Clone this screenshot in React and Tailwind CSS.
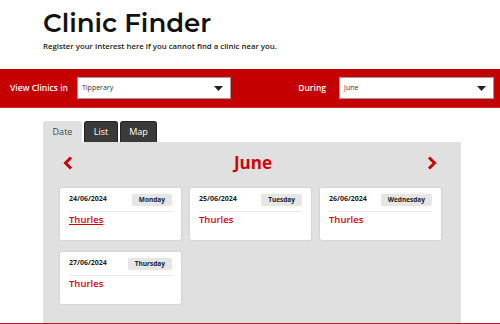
import React from "react";

const days = [
  { date: "24/06/2024", day: "Monday", underline: true },
  { date: "25/06/2024", day: "Tuesday" },
  { date: "26/06/2024", day: "Wednesday" },
  { date: "27/06/2024", day: "Thursday" },
];

function Caret() {
  return (
    <svg width="9" height="5" viewBox="0 0 9 5" className="shrink-0">
      <path d="M0 0 L9 0 L4.5 5 Z" fill="#222" />
    </svg>
  );
}

function Chevron({ dir }) {
  return (
    <svg width="10" height="14" viewBox="0 0 10 14">
      <polyline
        points={dir === "left" ? "8,1.5 2.5,7 8,12.5" : "2,1.5 7.5,7 2,12.5"}
        fill="none"
        stroke="#d00000"
        strokeWidth="3"
      />
    </svg>
  );
}

function Card({ d }) {
  return (
    <div className="w-[121px] h-[52px] bg-white rounded-[2px] shadow-[0_0_2px_rgba(0,0,0,0.18)] px-[9px] pt-[5px]">
      <div className="flex items-center justify-between h-[13px]">
        <span className="text-[7px] font-bold text-[#222]">{d.date}</span>
        <span className="h-[12px] px-[7px] flex items-center bg-[#e6e6e6] rounded-[2px] text-[6.5px] font-bold text-[#222]">
          {d.day}
        </span>
      </div>
      <div className="mt-[5px] border-t border-[#e8e8e8]" />
      <div
        className={
          "mt-[1px] text-[9.5px] font-semibold text-[#d60000] " +
          (d.underline ? "underline" : "")
        }
      >
        Thurles
      </div>
    </div>
  );
}

export default function App() {
  return (
    <div className="w-[500px] h-[324px] overflow-hidden bg-white font-['Open_Sans',sans-serif] flex flex-col">
      <div className="pl-[43px] pt-[6px] h-[69px]">
        <h1 className="font-['Montserrat','Noto_Sans',sans-serif] text-[26px] font-semibold leading-[34px] text-[#111]">
          Clinic Finder
        </h1>
        <p className="text-[7.8px] font-semibold text-[#222] leading-[11px] mt-[1px]">
          Register your interest here if you cannot find a clinic near you.
        </p>
      </div>

      <div className="h-[39px] bg-[#c40000] border-b border-[#d42a2a] flex items-center pl-[10px] pr-[6px]">
        <span className="text-white text-[8.5px] font-semibold w-[67px] whitespace-nowrap">View Clinics in</span>
        <div className="w-[154px] h-[22px] bg-white border border-[#999] flex items-center justify-between pl-[4px] pr-[7px]">
          <span className="text-[7px] text-[#333]">Tipperary</span>
          <Caret />
        </div>
        <span className="ml-auto text-white text-[8.5px] font-semibold mr-[13px]">During</span>
        <div className="w-[155px] h-[22px] bg-white border border-[#999] flex items-center justify-between pl-[4px] pr-[7px]">
          <span className="text-[7px] text-[#333]">June</span>
          <Caret />
        </div>
      </div>

      <div className="pl-[43px] pt-[13px] flex-1 flex flex-col">
        <div className="flex gap-[2px] h-[21px] items-end">
          <div className="w-[39px] h-[21px] bg-[#e0e0e0] rounded-t-[3px] flex items-center justify-center text-[9px] text-[#444]">
            Date
          </div>
          <div className="w-[34px] h-[21px] bg-[#3a3a3a] border border-[#222] border-b-0 rounded-t-[3px] flex items-center justify-center text-[9px] text-white">
            List
          </div>
          <div className="w-[37px] h-[21px] bg-[#3a3a3a] border border-[#222] border-b-0 rounded-t-[3px] flex items-center justify-center text-[9px] text-white">
            Map
          </div>
        </div>
        <div className="w-[418px] flex-1 bg-[#e0e0e0] pl-[17px] pr-[21px]">
          <div className="flex items-center justify-between h-[46px] px-[3px] pb-[4px]">
            <Chevron dir="left" />
            <span className="text-[17px] font-bold text-[#d00000] ml-[6px]">June</span>
            <Chevron dir="right" />
          </div>
          <div className="grid grid-cols-[121px_121px_121px] gap-x-[9px] gap-y-[12px]">
            {days.map((d) => (
              <Card key={d.date} d={d} />
            ))}
          </div>
        </div>
      </div>
      <div className="h-[1px] bg-[#b81c1c]" />
    </div>
  );
}
